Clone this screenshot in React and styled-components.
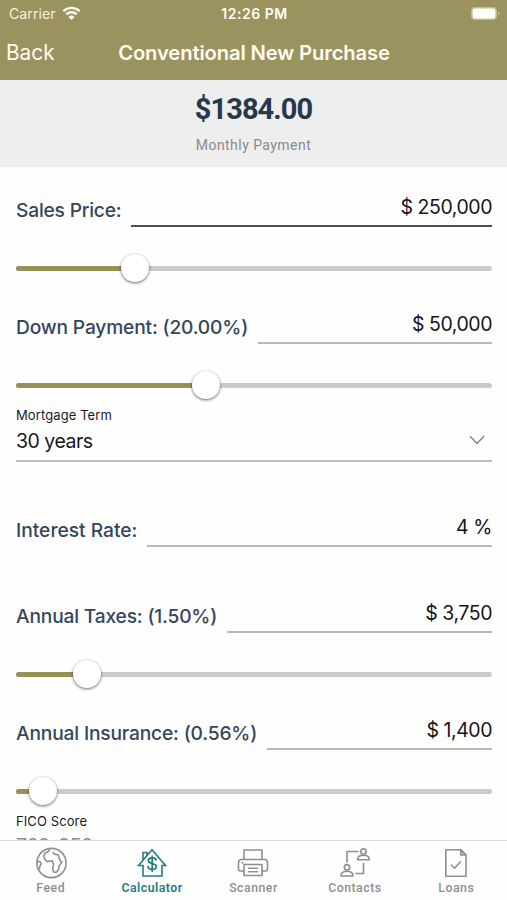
import React, { useState } from "react";
import styled, { createGlobalStyle } from "styled-components";

const GlobalStyle = createGlobalStyle`
  * {
    box-sizing: border-box;
  }
  body {
    margin: 0;
    background: #fefefe;
    font-family: Inter, "Liberation Sans", sans-serif;
  }
`;

const Screen = styled("div")`
  display: flex;
  flex-direction: column;
  width: 507px;
  height: 900px;
  overflow: hidden;
  background: #fefefe;
`;

const Header = styled("header")`
  flex: none;
  height: 79.5px;
  background: #9a935f;
  color: #fffdf2;
`;

const StatusBar = styled("div")`
  display: grid;
  grid-template-columns: 1fr auto 1fr;
  align-items: center;
  height: 27px;
  padding: 0 7px 0 9px;
  font-size: 14px;
`;

const Carrier = styled("div")`
  display: flex;
  align-items: center;
  gap: 6px;
  color: #f6f1dc;
  letter-spacing: 0.1px;
`;

const Clock = styled("div")`
  font-weight: 600;
  font-size: 14px;
  letter-spacing: 0.5px;
`;

const Battery = styled("svg")`
  justify-self: end;
  margin-right: -1px;
`;

const NavBar = styled("div")`
  display: grid;
  grid-template-columns: 1fr auto 1fr;
  align-items: center;
  height: 51px;
  padding: 0 5px 0 6px;
`;

const BackButton = styled("button")`
  justify-self: start;
  padding: 0;
  border: 0;
  background: none;
  color: inherit;
  font: 400 20.8px Inter, sans-serif;
`;

const Title = styled("h1")`
  margin: 0;
  font-size: 20.2px;
  font-weight: 600;
  letter-spacing: -0.12px;
`;

const Summary = styled("section")`
  flex: none;
  display: flex;
  flex-direction: column;
  align-items: center;
  height: 87.5px;
  padding-top: 11.5px;
  background: #eeeeee;
  font-family: Roboto, sans-serif;
`;

const Amount = styled("div")`
  color: #26394b;
  font-size: 29px;
  line-height: 36px;
  font-weight: 700;
  letter-spacing: -0.95px;
`;

const Caption = styled("div")`
  margin-top: 8.5px;
  color: #8b8b8b;
  font-size: 14px;
  line-height: 18px;
  letter-spacing: 0.45px;
`;

const Form = styled("main")`
  flex: 1;
  min-height: 0;
  overflow: hidden;
  padding: 0 15px 0 16px;
`;

const Row = styled("div")`
  display: flex;
  gap: 10px;
  height: 60px;
  margin-top: ${(props) => props.$gap || 0}px;
`;

const Label = styled("label")`
  flex: none;
  width: ${(props) => props.$width}px;
  padding-top: 31.4px;
  color: #34475a;
  font-size: 19.2px;
  line-height: 24px;
  font-weight: 500;
  letter-spacing: ${(props) => props.$spacing || 0}px;
  white-space: nowrap;
`;

const Value = styled("div")`
  flex: 1;
  padding-top: 28px;
  border-bottom: ${(props) => (props.$active ? "2px solid #505050" : "2px solid #b9b9b9")};
  color: #161616;
  font-size: 19.5px;
  line-height: 24px;
  letter-spacing: -0.45px;
  text-align: right;
`;

const SliderBox = styled("div")`
  height: 57px;
  padding-top: 26.5px;
`;

const Track = styled("div")`
  position: relative;
  height: 5px;
  margin: 12px 0;
  border-radius: 3px;
  background: #cacaca;
`;

const Fill = styled("div")`
  height: 5px;
  border-radius: 3px;
  background: #969157;
`;

const Thumb = styled("div")`
  position: absolute;
  top: -12px;
  width: 28px;
  height: 28px;
  margin-left: -14px;
  border-radius: 50%;
  background: #fff;
  box-shadow: 0 1px 3px rgba(0, 0, 0, 0.6);
`;

const SelectBox = styled("div")`
  height: 61px;
  padding-top: 5px;
  border-bottom: 2px solid #bfbfbf;
`;

const SelectLabel = styled("div")`
  color: #1b1b1b;
  font-size: 13px;
  line-height: 19px;
  letter-spacing: 0.1px;
`;

const SelectValue = styled("div")`
  display: flex;
  align-items: center;
  justify-content: space-between;
  height: ${(props) => (props.$muted ? 29 : 32)}px;
  padding-right: 6px;
  color: ${(props) => (props.$muted ? "#8a8a8a" : "#161616")};
  font-size: 19.5px;
  letter-spacing: -0.5px;
`;

const TabBar = styled("nav")`
  flex: none;
  display: grid;
  grid-template-columns: repeat(5, 1fr);
  height: 60px;
  border-top: 1px solid #dcdcdc;
  background: #fefefe;
`;

const Tab = styled("div")`
  display: flex;
  flex-direction: column;
  align-items: center;
  padding-top: 5px;
  color: ${(props) => (props.$active ? "#257c7e" : "#8f8f8f")};
  font-family: Roboto, sans-serif;
  font-size: 12.3px;
  line-height: 16px;
  font-weight: ${(props) => (props.$active ? 600 : 500)};
  letter-spacing: 0.5px;
`;

const lineIcon = {
  width: 34,
  height: 34,
  viewBox: "0 0 34 34",
  fill: "none",
  stroke: "currentColor",
  strokeWidth: 1.6,
  strokeLinejoin: "round",
  strokeLinecap: "round",
};

const GlobeIcon = () => (
  <svg {...lineIcon}>
    <circle cx="17.500" cy="17" r="14.600" />
    <path d="M15.500 3.200l-.8 2.300-3.500 1.300-1.200 3 .6 3.400 2.800 2.400 4.500-.8 1.400 2.200.1 2.700-.8 3.200 1.200 3.200 2.400.2 2.300-2.600.7-4 2.800-3.600-1.600-1-1.400-3.600-1-2.700-3.800-.7-1.200-1.500" />
    <path d="M3 15.500l3.200.4 1 2-1.200 1.800-.4 2.300-1.300 1.200" />
  </svg>
);

const HouseIcon = () => (
  <svg {...lineIcon} strokeLinejoin="miter">
    <path d="M3.500 19.500L17 3.800l13.500 15.700H27V30H8V19.500z" />
    <path d="M8 14V6.500h4v3" />
    <path
      d="M21 13.800c-.5-1.200-1.900-1.900-3.800-1.900-2.300 0-3.900 1-3.900 2.800 0 3.800 8 1.800 8 5.700 0 1.800-1.700 2.900-4.100 2.900-2.300 0-4-.9-4.200-2.700M17.200 10v15.500"
      strokeWidth="1.700"
    />
  </svg>
);

const PrinterIcon = () => (
  <svg {...lineIcon}>
    <path d="M8 13V4h18v9" />
    <path d="M8 25H4.500a2 2 0 0 1-2-2v-6.500a3 3 0 0 1 3-3h23a3 3 0 0 1 3 3V23a2 2 0 0 1-2 2H26" />
    <path d="M8 18.500h18V29.500H8zM12.500 22.300h9M12.500 25.800h9M6 16.800h1" />
  </svg>
);

const ContactsIcon = () => (
  <svg {...lineIcon}>
    <circle cx="25.500" cy="5.500" r="2.700" />
    <path d="M19.500 13.800c0-3 2.300-4.500 6-4.500s6 1.500 6 4.500z" />
    <circle cx="9" cy="21.300" r="2.700" />
    <path d="M3 30c0-3 2.300-4.700 6-4.700s6 1.700 6 4.700z" />
    <path d="M9 16V5.500h11M25.500 17.500V27.500H18" />
  </svg>
);

const LoansIcon = () => (
  <svg {...lineIcon}>
    <path d="M6.800 3.700h15l5.200 5.300v21.300H6.800z" />
    <path d="M21.800 3.700V9H27z" fill="currentColor" fillOpacity="0.3" />
    <path d="M12.300 19l3.200 3.200 6-6.400" />
  </svg>
);

const tabs = [
  { name: "Feed", icon: GlobeIcon },
  { name: "Calculator", icon: HouseIcon },
  { name: "Scanner", icon: PrinterIcon },
  { name: "Contacts", icon: ContactsIcon },
  { name: "Loans", icon: LoansIcon },
];

const WifiIcon = () => (
  <svg width="19" height="15" viewBox="0 0 19 15" fill="none" stroke="#fffdf2" strokeWidth="2.300">
    <path d="M1.300 5.200a11.700 11.700 0 0 1 16.400 0M4.300 8.400a7.400 7.400 0 0 1 10.400 0" />
    <path d="M9.500 14L6.400 10.900a4.400 4.400 0 0 1 6.200 0z" fill="#fffdf2" stroke="none" />
  </svg>
);

function Slider({ percent }) {
  return (
    <SliderBox>
      <Track>
        <Fill style={{ width: `${percent}%` }} />
        <Thumb style={{ left: `${percent}%` }} />
      </Track>
    </SliderBox>
  );
}

function Field({ label, value, width, spacing, active, gap }) {
  return (
    <Row $gap={gap}>
      <Label $width={width} $spacing={spacing}>{label}</Label>
      <Value $active={active}>{value}</Value>
    </Row>
  );
}

function Select({ label, value, muted }) {
  return (
    <SelectBox>
      <SelectLabel>{label}</SelectLabel>
      <SelectValue $muted={muted}>
        {value}
        <svg width="18" height="12" viewBox="0 0 18 12" fill="none" stroke="#858585" strokeWidth="1.500">
          <path d="M2 1.200l7 7.300 7-7.300" />
        </svg>
      </SelectValue>
    </SelectBox>
  );
}

export default function App() {
  const [currentTab, setCurrentTab] = useState("Calculator");

  return (
    <Screen>
      <GlobalStyle />
      <Header>
        <StatusBar>
          <Carrier>
            Carrier
            <WifiIcon />
          </Carrier>
          <Clock>12:26 PM</Clock>
          <Battery width="31" height="15" viewBox="0 0 31 15">
            <rect x="1" y="1" width="26" height="13" rx="4" fill="#c3bd91" />
            <rect x="2.600" y="2.600" width="22.800" height="9.800" rx="2.500" fill="#fff" />
            <path d="M28.300 5.500c2 .7 2 3.300 0 4z" fill="#c3bd91" />
          </Battery>
        </StatusBar>
        <NavBar>
          <BackButton>Back</BackButton>
          <Title>Conventional New Purchase</Title>
        </NavBar>
      </Header>
      <Summary>
        <Amount>$1384.00</Amount>
        <Caption>Monthly Payment</Caption>
      </Summary>
      <Form>
        <Field label="Sales Price:" value="$ 250,000" width={105} spacing={-0.2} active />
        <Slider percent={25} />
        <Field label="Down Payment: (20.00%)" value="$ 50,000" width={232} spacing={-0.17} />
        <Slider percent={40} />
        <Select label="Mortgage Term" value="30 years" />
        <Field label="Interest Rate:" value="4 %" width={121} gap={25} />
        <Field label="Annual Taxes: (1.50%)" value="$ 3,750" width={201} spacing={-0.18} gap={26} />
        <Slider percent={15} />
        <Field label="Annual Insurance: (0.56%)" value="$ 1,400" width={241} spacing={-0.17} />
        <Slider percent={5.6} />
        <Select label="FICO Score" value="760-850" muted />
      </Form>
      <TabBar>
        {tabs.map(({ name, icon: Icon }) => (
          <Tab key={name} $active={name === currentTab} onClick={() => setCurrentTab(name)}>
            <Icon />
            {name}
          </Tab>
        ))}
      </TabBar>
    </Screen>
  );
}
